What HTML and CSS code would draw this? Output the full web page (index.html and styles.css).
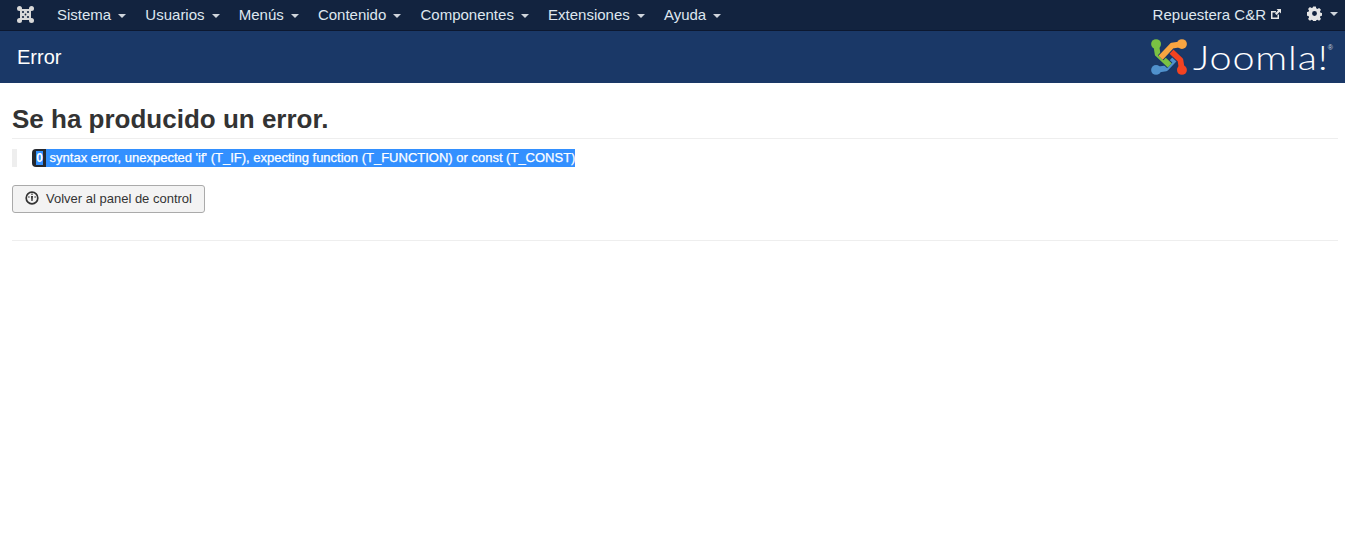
FILE: index.html
```html
<!DOCTYPE html>
<html lang="es">
<head>
<meta charset="utf-8">
<title>Error</title>
<link rel="stylesheet" href="styles.css">
</head>
<body>
<nav class="topbar">
  <a class="brand" href="#" aria-label="Joomla">
    <svg class="brand-icon" viewBox="0 0 34 34" width="17" height="17">
      <g fill="#d9d9d9">
        <circle cx="5" cy="5" r="5"/><circle cx="29" cy="5" r="5"/><circle cx="5" cy="29" r="5"/><circle cx="29" cy="29" r="5"/>
        <rect x="6" y="6" width="22" height="22" rx="2"/>
      </g>
      <g fill="#12233f">
        <circle cx="12" cy="12" r="2.200"/><circle cx="22" cy="12" r="2.200"/><circle cx="12" cy="22" r="2.200"/><circle cx="22" cy="22" r="2.200"/>
        <circle cx="17" cy="17" r="1.800"/>
      </g>
    </svg>
  </a>
  <ul class="menu">
    <li class="menu-item">Sistema <span class="caret"></span></li>
    <li class="menu-item">Usuarios <span class="caret"></span></li>
    <li class="menu-item">Menús <span class="caret"></span></li>
    <li class="menu-item">Contenido <span class="caret"></span></li>
    <li class="menu-item">Componentes <span class="caret"></span></li>
    <li class="menu-item">Extensiones <span class="caret"></span></li>
    <li class="menu-item">Ayuda <span class="caret"></span></li>
  </ul>
  <div class="menu-right">
    <a class="site-link" href="#">Repuestera C&amp;R
      <svg class="ext-icon" viewBox="0 0 12 12" width="12" height="12">
        <path d="M1 3 H6 V4.500 H2.500 V9.500 H7.500 V6.500 H9 V11 H1 Z" fill="#e6e6e6"/>
        <path d="M6.500 1 H11 V5.500 L9.500 4 L6.500 7 L5 5.500 L8 2.500 Z" fill="#e6e6e6"/>
      </svg>
    </a>
    <span class="gear-item">
      <svg class="gear" viewBox="0 0 16 16" width="15" height="15">
        <path fill="#e6e6e6" fill-rule="evenodd" d="M6.600 0.500h2.800l.4 2 1.300.6 1.800-1.100 2 2-1.100 1.800.6 1.300 2 .4v2.800l-2 .4-.6 1.300 1.100 1.800-2 2-1.800-1.100-1.300.6-.4 2H6.600l-.4-2-1.300-.6-1.800 1.100-2-2 1.100-1.800-.6-1.300-2-.4V6.600l2-.4.6-1.300-1.100-1.800 2-2 1.800 1.100 1.300-.6zM8 5.400a2.600 2.600 0 1 0 0 5.200 2.600 2.600 0 0 0 0-5.200z"/>
      </svg>
      <span class="caret"></span>
    </span>
  </div>
</nav>
<header class="subhead">
  <h2 class="page-title">Error</h2>
  <div class="logo">
    <svg class="logo-mark" viewBox="0 0 50 50" width="38" height="38">
      <g fill="none" stroke-width="7.500" stroke-linejoin="round">
        <path class="casing" d="M8 42 L21 40 L36 24"/>
        <path d="M8 42 L21 40 L36 24" stroke="#5091cd"/>
        <path class="casing" d="M8 8 L10 21 L26 36"/>
        <path d="M8 8 L10 21 L26 36" stroke="#7ac143"/>
        <path class="casing" d="M42 42 L40 29 L24 14"/>
        <path d="M42 42 L40 29 L24 14" stroke="#f44321"/>
        <path class="casing" d="M42 8 L29 10 L14 26"/>
        <path d="M42 8 L29 10 L14 26" stroke="#f9a541"/>
      </g>
      <circle cx="8" cy="8" r="6.500" fill="#7ac143"/>
      <circle cx="42" cy="8" r="6.500" fill="#f9a541"/>
      <circle cx="8" cy="42" r="6.500" fill="#5091cd"/>
      <circle cx="42" cy="42" r="6.500" fill="#f44321"/>
    </svg>
    <span class="logo-text">Joomla!</span><sup class="logo-reg">®</sup>
  </div>
</header>
<main class="content">
  <h1 class="error-title">Se ha producido un error.</h1>
  <blockquote class="error-quote">
    <span class="badge"><span class="sel">0</span></span><span class="sel sel-text"> syntax error, unexpected 'if' (T_IF), expecting function (T_FUNCTION) or const (T_CONST)</span>
  </blockquote>
  <a class="btn" href="#">
    <svg class="dash-icon" viewBox="0 0 14 14" width="14" height="14">
      <circle cx="7" cy="7" r="5.800" fill="none" stroke="#333" stroke-width="1.700"/>
      <path d="M6 5 H8 L7.600 10 H6.400 Z" fill="#333"/>
      <circle cx="3.900" cy="6" r=".8" fill="#333"/><circle cx="10.100" cy="6" r=".8" fill="#333"/><circle cx="7" cy="3.300" r=".8" fill="#333"/>
    </svg>
    Volver al panel de control
  </a>
  <hr class="rule">
</main>
</body>
</html>
```
FILE: styles.css
```css
* { box-sizing: border-box; }
html, body { margin: 0; padding: 0; }
body {
  background: #fff;
  color: #333;
  font-family: "Liberation Sans", Arial, sans-serif;
  font-size: 13px;
}
.topbar {
  display: flex;
  align-items: center;
  height: 31px;
  padding-bottom: 2px;
  background: #12233f;
  border-bottom: 1px solid #0c1830;
  color: #dfe7ef;
  font-size: 15px;
}
.brand { display: flex; width: 57px; padding-left: 17px; }
.menu { display: flex; gap: 19px; margin: 0; padding: 0; list-style: none; }
.menu-item { white-space: nowrap; }
.caret {
  display: inline-block;
  width: 0;
  height: 0;
  margin-left: 3px;
  vertical-align: middle;
  border-top: 4px solid #cfd5dd;
  border-left: 4px solid transparent;
  border-right: 4px solid transparent;
}
.menu-right { display: flex; align-items: center; margin-left: auto; padding-right: 7px; }
.site-link { display: flex; align-items: center; gap: 4px; color: #dfe7ef; text-decoration: none; }
.gear-item { display: flex; align-items: center; gap: 5px; margin-left: 25px; }
.gear { display: block; margin-top: -2px; }
.subhead {
  display: flex;
  align-items: center;
  justify-content: space-between;
  height: 52px;
  padding: 0 12px 0 17px;
  background: #1a3867;
  color: #fff;
}
.page-title { margin: 0; font-size: 20px; font-weight: 400; }
.logo { display: flex; align-items: center; color: #fff; margin-top: -1px; }
.logo-mark { display: block; margin-right: 5px; }
.casing { stroke: #1a3867; stroke-width: 10; }
.logo-text {
  display: inline-block;
  width: 135px;
  font-family: Lato, sans-serif;
  font-weight: 300;
  font-size: 33px;
  line-height: 38px;
  letter-spacing: 0.700px;
  transform: scaleX(1.200);
  transform-origin: left center;
  white-space: nowrap;
}
.logo-reg { font-size: 7px; align-self: flex-start; margin-top: 6px; color: #d0d6df; line-height: 1; }
.content { padding: 0 7px 0 12px; }
.error-title {
  margin: 0;
  padding: 21px 0 4px;
  border-bottom: 1px solid #eee;
  color: #333;
  font-size: 26px;
  line-height: 30px;
  font-weight: 700;
}
.error-quote {
  display: flex;
  align-items: center;
  height: 18px;
  margin: 10px 0 18px;
  padding-left: 15px;
  border-left: 5px solid #eee;
  white-space: pre;
}
.badge {
  display: flex;
  align-items: center;
  justify-content: center;
  height: 18px;
  width: 15px;
  background: #26292f;
  border-radius: 4px 0 0 4px;
  font-size: 12px;
  font-weight: 700;
}
.sel { background: #3390ff; color: #fff; }
.sel-text {
  display: block;
  height: 18px;
  line-height: 18px;
  margin-left: -1px;
  font-size: 13px;
  -webkit-text-stroke: 0.25px #fff;
}
.btn {
  display: inline-flex;
  align-items: center;
  gap: 7px;
  height: 28px;
  padding: 0 12px 2px;
  background: #f3f3f3;
  border: 1px solid #aaa;
  border-radius: 3px;
  color: #333;
  font-size: 13px;
  text-decoration: none;
}
.dash-icon { display: block; }
.rule { height: 0; margin: 27px 0 0; border: 0; border-top: 1px solid #eee; }
```
